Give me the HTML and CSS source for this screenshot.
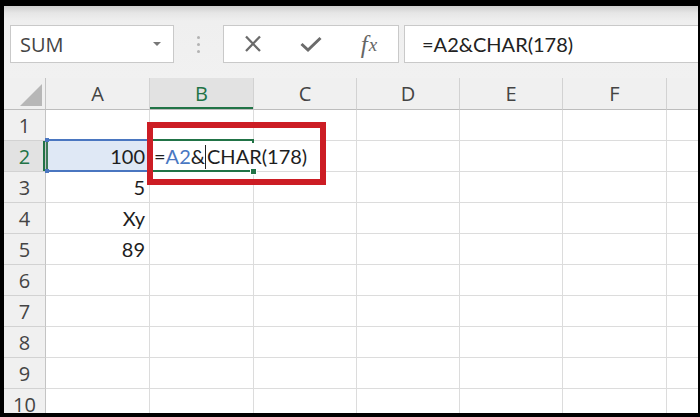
FILE: index.html
```html
<!DOCTYPE html>
<html>
<head>
<meta charset="utf-8">
<title>Excel CHAR</title>
<link rel="stylesheet" href="styles.css">
</head>
<body>
<div class="screen">
  <div class="toolbar">
    <div class="namebox"><span class="name">SUM</span><span class="caret"></span></div>
    <div class="grip"><i></i><i></i><i></i></div>
    <div class="fxbox">
      <span class="tool"><svg width="20" height="18" viewBox="0 0 20 18"><path d="M3 1.5 L17 16 M17 1.5 L3 16" stroke="#6b6b6b" stroke-width="2.3" fill="none"/></svg></span>
      <span class="tool"><svg width="24" height="18" viewBox="0 0 24 18"><path d="M2.5 9 L9 15 L21.5 3" stroke="#6b6b6b" stroke-width="3" fill="none"/></svg></span>
      <span class="tool fx"><i class="f">f</i><i class="x">x</i></span>
    </div>
    <div class="formula">=A2&amp;CHAR(178)</div>
  </div>
  <div class="sheet">
    <div class="corner"><span class="tri"></span></div>
    <div class="ch">A</div><div class="ch sel">B</div><div class="ch">C</div><div class="ch">D</div><div class="ch">E</div><div class="ch">F</div><div class="ch last"></div>

    <div class="rh">1</div><div class="c"></div><div class="c"></div><div class="c"></div><div class="c"></div><div class="c"></div><div class="c"></div><div class="c last"></div>

    <div class="rh sel">2</div>
    <div class="c num ref"><span class="val">100</span><i class="h tl"></i><i class="h tr"></i><i class="h bl"></i><i class="h br"></i></div>
    <div class="c active"><span class="editor">=<span class="rf">A2</span>&amp;<span class="cursor"></span>CHAR(178)</span><i class="fill"></i></div>
    <div class="c"></div><div class="c"></div><div class="c"></div><div class="c"></div><div class="c last"></div>

    <div class="rh">3</div><div class="c num">5</div><div class="c"></div><div class="c"></div><div class="c"></div><div class="c"></div><div class="c"></div><div class="c last"></div>

    <div class="rh">4</div><div class="c num">Xy</div><div class="c"></div><div class="c"></div><div class="c"></div><div class="c"></div><div class="c"></div><div class="c last"></div>

    <div class="rh">5</div><div class="c num">89</div><div class="c"></div><div class="c"></div><div class="c"></div><div class="c"></div><div class="c"></div><div class="c last"></div>

    <div class="rh">6</div><div class="c"></div><div class="c"></div><div class="c"></div><div class="c"></div><div class="c"></div><div class="c"></div><div class="c last"></div>

    <div class="rh">7</div><div class="c"></div><div class="c"></div><div class="c"></div><div class="c"></div><div class="c"></div><div class="c"></div><div class="c last"></div>

    <div class="rh">8</div><div class="c"></div><div class="c"></div><div class="c"></div><div class="c"></div><div class="c"></div><div class="c"></div><div class="c last"></div>

    <div class="rh">9</div><div class="c"></div><div class="c"></div><div class="c"></div><div class="c"></div><div class="c"></div><div class="c"></div><div class="c last"></div>

    <div class="rh">10</div><div class="c"></div><div class="c"></div><div class="c"></div><div class="c"></div><div class="c"></div><div class="c"></div><div class="c last"></div>
  </div>
  <div class="callout"></div>
</div>
</body>
</html>
```

FILE: styles.css
```css
html, body {
  margin: 0;
  background: #000;
}
body {
  width: 700px;
  height: 417px;
  overflow: hidden;
}
.screen {
  position: relative;
  margin: 6px 2px 0 4px;
  height: 407px;
  overflow: hidden;
  background: #fff;
  font-family: "Open Sans", "Noto Sans", sans-serif;
}

/* formula bar */
.toolbar {
  height: 72px;
  box-sizing: border-box;
  padding-top: 19px;
  display: flex;
  align-items: flex-start;
  background: linear-gradient(#cfcfcf 0, #e6e6e6 7px, #efefef 15px, #f1f1f1 100%);
}
.namebox {
  margin-left: 6px;
  width: 164px;
  height: 38px;
  box-sizing: border-box;
  border: 1px solid #c9c9c9;
  background: #fff;
  display: flex;
  align-items: center;
  justify-content: space-between;
  padding: 0 12px 0 9px;
}
.name {
  font-size: 20px;
  color: #444;
}
.caret {
  width: 0;
  height: 0;
  border-left: 4px solid transparent;
  border-right: 4px solid transparent;
  border-top: 4px solid #777;
}
.grip {
  width: 49px;
  height: 38px;
  display: flex;
  flex-direction: column;
  align-items: center;
  justify-content: center;
  gap: 4px;
}
.grip i {
  width: 3px;
  height: 3px;
  background: #b3b3b3;
  border-radius: 50%;
}
.fxbox {
  width: 176px;
  height: 38px;
  box-sizing: border-box;
  border: 1px solid #c9c9c9;
  background: #fff;
  display: flex;
}
.tool {
  width: 58px;
  display: flex;
  align-items: center;
  justify-content: center;
}
.fx {
  font-family: "Liberation Serif", serif;
  color: #666;
  font-size: 25px;
  line-height: 1;
}
.fx .x {
  font-size: 19px;
  margin-left: 1px;
}
.formula {
  margin-left: 5px;
  flex: 1;
  height: 38px;
  box-sizing: border-box;
  border: 1px solid #c9c9c9;
  border-right: none;
  background: #fff;
  padding-left: 17px;
  display: flex;
  align-items: center;
  font-family: Lato, sans-serif;
  font-size: 20px;
  color: #222;
}

/* grid */
.sheet {
  display: grid;
  grid-template-columns: 42px 104px 104px 103px 103px 103px 104px 1fr;
  grid-template-rows: 32px;
  grid-auto-rows: 31px;
}
.sheet > div {
  box-sizing: border-box;
  border-right: 1px solid #dcdcdc;
  border-bottom: 1px solid #dcdcdc;
  display: flex;
  align-items: center;
}
.corner, .ch, .rh {
  background: #f0f0f0;
  color: #444;
  font-size: 20px;
}
.corner {
  justify-content: flex-end;
  align-items: flex-end !important;
  border-right-color: #c4c4c4 !important;
  border-bottom-color: #bdbdbd !important;
}
.tri {
  width: 22px;
  height: 22px;
  margin: 0 3px 3px 0;
  background: #b7b7b7;
  clip-path: polygon(100% 0, 100% 100%, 0 100%);
}
.ch {
  justify-content: center;
  border-right-color: #d2d2d2 !important;
  border-bottom-color: #bdbdbd !important;
}
.ch.sel {
  background: #e2e2e2;
  color: #217346;
  box-shadow: inset 0 -2px 0 #217346;
}
.rh {
  justify-content: center;
  border-right-color: #c4c4c4 !important;
  border-bottom-color: #d2d2d2 !important;
}
.rh.sel {
  background: #e2e2e2;
  color: #217346;
  box-shadow: inset -2px 0 0 #217346;
}
.c {
  position: relative;
  font-family: Lato, sans-serif;
  font-size: 20px;
  color: #1e1e1e;
  white-space: nowrap;
}
.c.last, .ch.last {
  border-right: none !important;
}
.num {
  justify-content: flex-end;
  padding-right: 4px;
}

/* referenced range A2 */
.ref {
  background: #dfe8f5;
}
.ref::before {
  content: "";
  position: absolute;
  top: -2px;
  left: 0;
  right: -1px;
  bottom: -1px;
  border: 2px solid #4a76c0;
  border-left-color: #3b7a57;
}
.ref .val {
  position: relative;
}
.h {
  position: absolute;
  width: 4px;
  height: 4px;
  background: #4a76c0;
}
.h.tl { top: -3px; left: -1px; }
.h.tr { top: -3px; right: -2px; }
.h.bl { bottom: -2px; left: -1px; }
.h.br { bottom: -2px; right: -2px; }

/* active cell B2 in edit mode */
.active::before {
  content: "";
  position: absolute;
  top: -2px;
  left: -1px;
  right: -1px;
  bottom: -1px;
  border-top: 2px solid #217346;
  border-bottom: 2px solid #217346;
  border-right: 2px solid #217346;
}
.editor {
  position: relative;
  z-index: 2;
  background: #fff;
  margin-left: 1px;
  padding: 0 4px 0 3px;
  height: 26px;
  line-height: 26px;
}
.rf {
  color: #4a78c2;
}
.cursor {
  display: inline-block;
  width: 1px;
  height: 24px;
  background: #222;
  vertical-align: -5px;
  margin: 0 1px 0 0;
}
.fill {
  position: absolute;
  right: -4px;
  bottom: -4px;
  width: 5px;
  height: 5px;
  background: #217346;
  border: 1px solid #fff;
  z-index: 3;
}

/* annotation box */
.callout {
  position: absolute;
  left: 143px;
  top: 116px;
  width: 179px;
  height: 63px;
  box-sizing: border-box;
  border: 6px solid #cc1d24;
  z-index: 5;
}
```
